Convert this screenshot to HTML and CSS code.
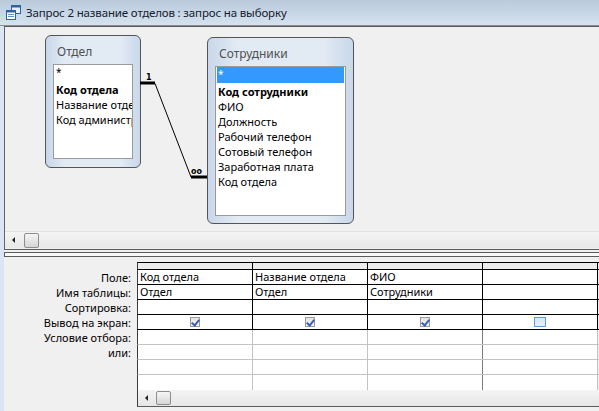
FILE: index.html
```html
<!DOCTYPE html>
<html lang="ru">
<head>
<meta charset="utf-8">
<title>Запрос 2</title>
<link rel="stylesheet" href="styles.css">
</head>
<body>
<div class="titlebar">
  <svg class="ticon" width="15" height="15" viewBox="0 0 15 15">
    <rect x="5.5" y="0.5" width="9" height="8" fill="#e8f0fa" stroke="#2f62a8"/>
    <rect x="5.5" y="0.5" width="9" height="2" fill="#2f62a8"/>
    <rect x="0.5" y="5.5" width="9" height="9" fill="#ffffff" stroke="#2f62a8"/>
    <rect x="0.5" y="5.5" width="9" height="2" fill="#2f62a8"/>
    <line x1="2" y1="9.5" x2="8" y2="9.5" stroke="#5b8fd0"/>
    <line x1="2" y1="11.5" x2="8" y2="11.5" stroke="#5b8fd0"/>
  </svg>
  <span class="title-text">Запрос 2 название отделов : запрос на выборку</span>
</div>
<div class="frame">
  <div class="edge"></div>
  <div class="content">
    <div class="upper">
      <div class="canvas">
        <div class="tbox tbox-otdel">
          <div class="tbox-title">Отдел</div>
          <div class="tlist tlist-otdel">
            <div class="item star">*</div>
            <div class="item bold">Код отдела</div>
            <div class="item">Название отдела</div>
            <div class="item">Код администратора</div>
          </div>
        </div>
        <div class="tbox tbox-sotr">
          <div class="tbox-title">Сотрудники</div>
          <div class="tlist tlist-sotr">
            <div class="item star selected">*</div>
            <div class="item bold">Код сотрудники</div>
            <div class="item">ФИО</div>
            <div class="item">Должность</div>
            <div class="item">Рабочий телефон</div>
            <div class="item">Сотовый телефон</div>
            <div class="item">Заработная плата</div>
            <div class="item">Код отдела</div>
          </div>
        </div>
        <svg class="relation" width="594" height="204" viewBox="0 0 594 204">
          <line x1="135" y1="56" x2="150" y2="56" stroke="#000" stroke-width="3"/>
          <line x1="150" y1="56.5" x2="186" y2="150" stroke="#000" stroke-width="1"/>
          <line x1="186" y1="150" x2="202" y2="150" stroke="#000" stroke-width="3"/>
          <text x="141" y="53" class="rel-label">1</text>
          <text x="186" y="147" class="rel-label">oo</text>
        </svg>
      </div>
      <div class="hscroll">
        <span class="arrow"></span>
        <span class="thumb"></span>
      </div>
    </div>
    <div class="splitter"></div>
    <div class="lower">
      <div class="labels">
        <div class="lhead"></div>
        <div class="lrow">Поле:</div>
        <div class="lrow">Имя таблицы:</div>
        <div class="lrow">Сортировка:</div>
        <div class="lrow">Вывод на экран:</div>
        <div class="lrow">Условие отбора:</div>
        <div class="lrow">или:</div>
      </div>
      <div class="qgrid">
        <div class="grow ghead">
          <div class="gc"></div><div class="gc"></div><div class="gc"></div><div class="gc"></div>
        </div>
        <div class="grow">
          <div class="gc">Код отдела</div><div class="gc">Название отдела</div><div class="gc">ФИО</div><div class="gc"></div>
        </div>
        <div class="grow">
          <div class="gc">Отдел</div><div class="gc">Отдел</div><div class="gc">Сотрудники</div><div class="gc"></div>
        </div>
        <div class="grow">
          <div class="gc"></div><div class="gc"></div><div class="gc"></div><div class="gc"></div>
        </div>
        <div class="grow">
          <div class="gc center"><span class="chk checked"></span></div>
          <div class="gc center"><span class="chk checked"></span></div>
          <div class="gc center"><span class="chk checked"></span></div>
          <div class="gc center"><span class="chk empty"></span></div>
        </div>
        <div class="grow light">
          <div class="gc"></div><div class="gc"></div><div class="gc"></div><div class="gc"></div>
        </div>
        <div class="grow light">
          <div class="gc"></div><div class="gc"></div><div class="gc"></div><div class="gc"></div>
        </div>
        <div class="grow light">
          <div class="gc"></div><div class="gc"></div><div class="gc"></div><div class="gc"></div>
        </div>
        <div class="grow light last">
          <div class="gc"></div><div class="gc"></div><div class="gc"></div><div class="gc"></div>
        </div>
        <div class="gscroll">
          <span class="arrow"></span>
          <span class="thumb"></span>
        </div>
      </div>
    </div>
  </div>
</div>
</body>
</html>
```
FILE: styles.css
```css
* { box-sizing: border-box; margin: 0; padding: 0; }
html, body { width: 599px; height: 411px; overflow: hidden; }
body {
  background: #f0f0f0;
  font-family: "Noto Sans", "Liberation Sans", sans-serif;
  font-size: 11px;
  color: #000;
}

.titlebar {
  height: 26px;
  background: linear-gradient(#b9cadb, #d5e2f0);
  border-bottom: 1px solid #8c8c8c;
  display: flex;
  align-items: center;
  padding-left: 6px;
  gap: 5px;
}
.ticon { flex: none; }
.title-text {
  font-family: "Noto Sans", sans-serif;
  font-size: 11.5px;
  letter-spacing: -0.15px;
  color: #15202e;
  white-space: nowrap;
}

.frame { display: flex; height: 385px; }
.edge { width: 4px; background: #dbe6f4; flex: none; }
.content { flex: 1; display: flex; flex-direction: column; }

.upper {
  height: 224px;
  border-left: 1px solid #646464;
  border-top: 1px solid #5c5c5c;
  border-bottom: 1px solid #5c5c5c;
  display: flex;
  flex-direction: column;
}
.canvas { position: relative; height: 204px; background: #f0f0f0; }
.hscroll {
  height: 17px;
  margin-bottom: 1px;
  background: linear-gradient(#f4f4f4, #e8e8e8);
  border-top: 1px solid #e2e2e2;
  display: flex;
  align-items: center;
  padding-left: 7px;
}
.arrow {
  width: 0; height: 0;
  border-top: 3px solid transparent;
  border-bottom: 3px solid transparent;
  border-right: 3px solid #222;
}
.thumb {
  width: 15px; height: 15px;
  margin-left: 9px;
  border: 1px solid #8e8e8e;
  border-radius: 2px;
  background: linear-gradient(#f6f6f6, #d6d6d6);
}

.tbox {
  position: absolute;
  border: 1px solid #555;
  border-radius: 6px;
  background: linear-gradient(90deg, #c8d7ea, #e2eaf4 20%, #e2eaf4 80%, #c8d7ea);
  padding: 0 7px;
  display: flex;
  flex-direction: column;
}
.tbox-otdel { left: 40px; top: 8px; width: 96px; height: 133px; }
.tbox-sotr { left: 202px; top: 10px; width: 147px; height: 187px; }
.tbox-title {
  height: 28px;
  padding: 8px 0 0 4px;
  font-size: 12px;
  line-height: 16px;
  color: #505050;
}
.tlist {
  background: #fff;
  border: 1px solid #9a9a9a;
  padding: 0 1px;
  overflow: hidden;
}
.tlist-otdel { height: 95px; }
.tlist-sotr { height: 150px; }
.item {
  height: 15px;
  line-height: 15px;
  white-space: nowrap;
  padding-left: 1px;
}
.item.bold { font-weight: bold; }
.item.star { height: 16px; margin-bottom: 1px; font-size: 10px; line-height: 14px; }
.item.selected { background: #3399ff; color: #fff; }

.relation { position: absolute; left: 0; top: 0; pointer-events: none; }
.rel-label { font-family: "DejaVu Sans", sans-serif; font-size: 8px; font-weight: bold; }

.splitter {
  height: 5px;
  margin-top: 2px;
  border: 1px solid #5c5c5c;
  border-right: none;
  background: #f8f8f8;
}

.lower { display: flex; height: 154px; padding-top: 5px; }
.labels { width: 133px; flex: none; }
.lhead { height: 8px; }
.lrow {
  height: 15px;
  line-height: 15px;
  text-align: right;
  padding-right: 6px;
  white-space: nowrap;
}

.qgrid { flex: 1; display: flex; flex-direction: column; }
.grow {
  display: flex;
  height: 15px;
  border-left: 1px solid #3c3c3c;
  border-bottom: 1px solid #000;
}
.ghead { height: 8px; border-top: 1px solid #000; }
.ghead .gc { background: #ededed; }
.gc {
  width: 115px;
  flex: none;
  background: #fff;
  border-right: 1px solid #000;
  padding-left: 2px;
  line-height: 14px;
  white-space: nowrap;
  overflow: hidden;
}
.gc.center { display: flex; align-items: center; justify-content: center; padding-left: 0; }
.grow.light { border-bottom-color: #c3c3c3; }
.grow.light .gc { border-right-color: #c3c3c3; }
.grow.light .gc:nth-child(3) { border-right-color: #7c7c7c; }
.grow.last { border-bottom: none; }

.chk { display: block; }
.chk.checked {
  width: 10px; height: 10px;
  border: 1px solid #9a9a9a;
  background: linear-gradient(#e2e2e2, #f6f6f6);
  position: relative;
}
.chk.checked::after {
  content: "";
  position: absolute;
  left: 2px; top: 0px;
  width: 3px; height: 6px;
  border-right: 2px solid #3a5fb4;
  border-bottom: 2px solid #3a5fb4;
  transform: rotate(40deg);
}
.chk.empty {
  width: 12px; height: 10px;
  border: 1px solid #5e9bd8;
  background: linear-gradient(#cfe6fb, #e6f2fd);
}

.gscroll {
  height: 17px;
  border-left: 1px solid #3c3c3c;
  border-bottom: 1px solid #5c5c5c;
  background: linear-gradient(#f4f4f4, #e6e6e6);
  display: flex;
  align-items: center;
  padding-left: 7px;
}
.gscroll .thumb { margin-left: 8px; height: 14px; }
```
